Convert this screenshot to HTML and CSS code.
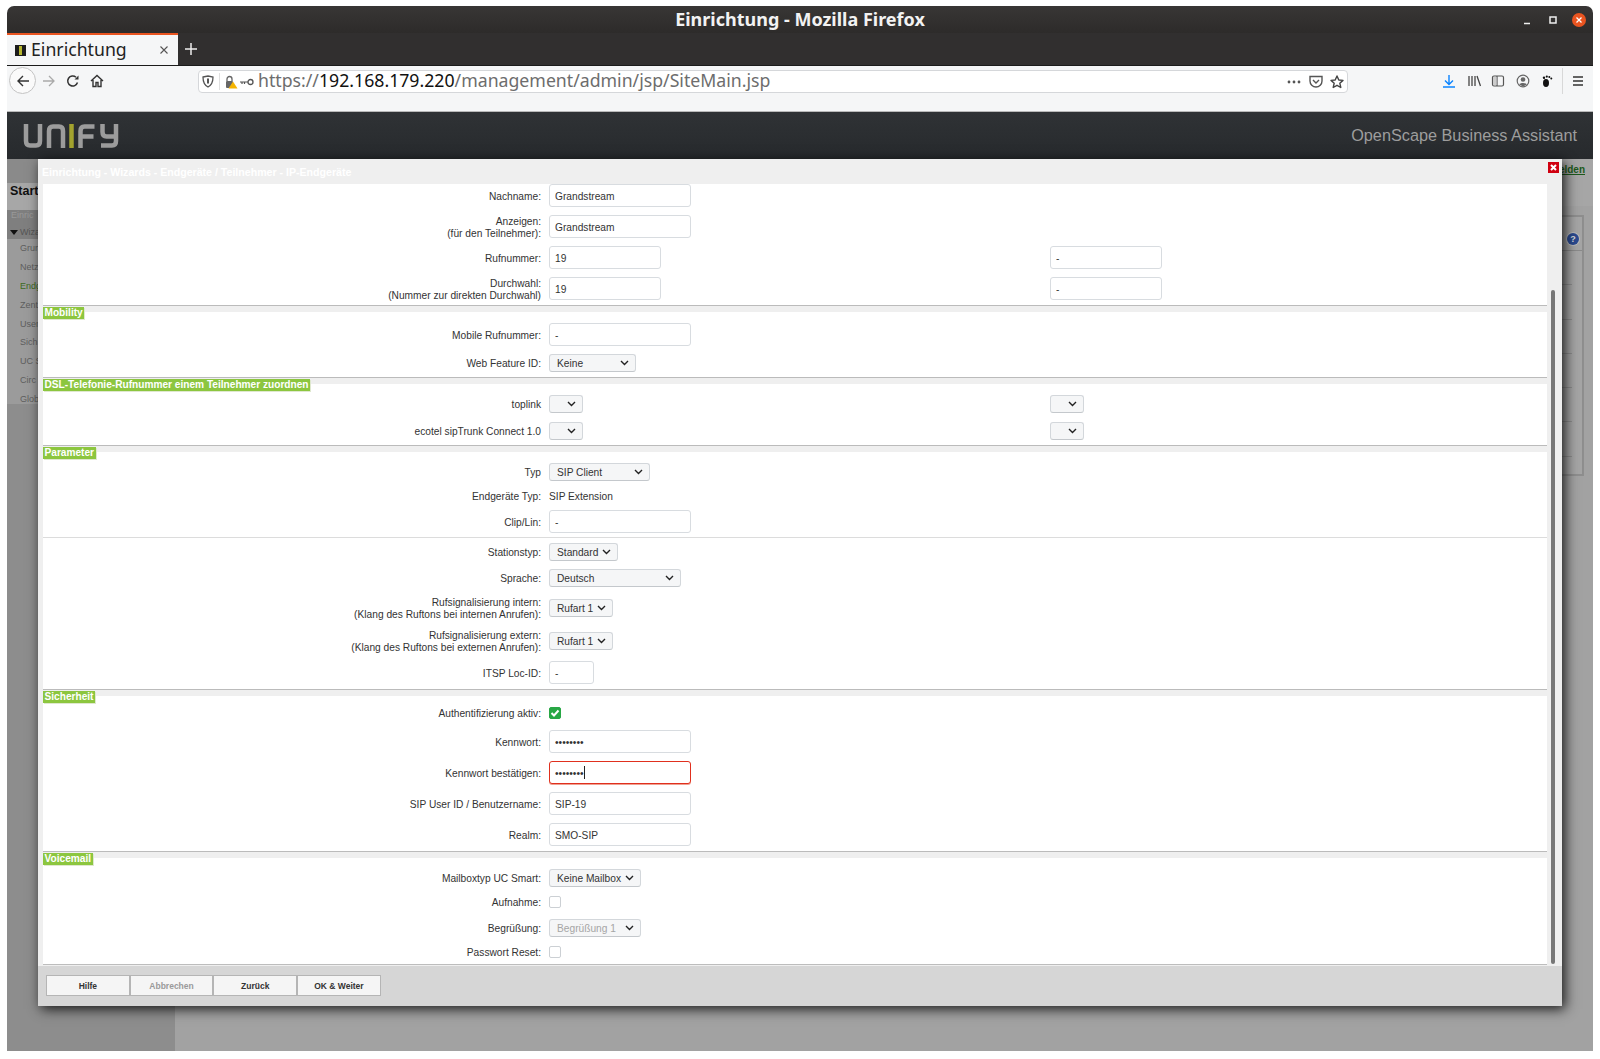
FILE: index.html
```html
<!DOCTYPE html>
<html lang="de">

<head>
    <meta charset="UTF-8">
    <meta name="viewport" content="width=device-width, initial-scale=1.0">
    <title>Einrichtung - Mozilla Firefox</title>
    <link rel="stylesheet" href="styles.css">
</head>

<body>
    <div class="window">
        <div class="titlebar">
            <span></span>
            <div class="title">Einrichtung - Mozilla Firefox</div>
            <div class="win-controls">
                <svg width="14" height="14" viewBox="0 0 14 14"><path d="M4 10.5h6" stroke="#eee" stroke-width="1.4"/></svg>
                <svg width="14" height="14" viewBox="0 0 14 14"><rect x="4" y="4" width="6" height="6" fill="none" stroke="#eee" stroke-width="1.5"/></svg>
                <svg width="14" height="14" viewBox="0 0 14 14"><circle cx="7" cy="7" r="7" fill="#e95420"/><path d="M4.5 4.5l5 5M9.5 4.5l-5 5" stroke="#fff" stroke-width="1.3"/></svg>
            </div>
        </div>

        <div class="tabbar">
            <div class="tab">
                <svg class="favicon" width="11" height="11" viewBox="0 0 11 11"><rect width="11" height="11" fill="#1c1c1c"/><rect x="4" y="1" width="3" height="9" fill="#b5b52e"/></svg>
                <span class="tab-label">Einrichtung</span>
                <svg class="tab-close" width="10" height="10" viewBox="0 0 10 10"><path d="M1.5 1.5l7 7M8.5 1.5l-7 7" stroke="#555" stroke-width="1.1"/></svg>
            </div>
            <svg class="new-tab" width="12" height="12" viewBox="0 0 12 12"><path d="M6 0v12M0 6h12" stroke="#eee" stroke-width="1.5"/></svg>
        </div>

        <div class="navbar">
            <div class="back-btn">
                <svg width="14" height="14" viewBox="0 0 14 14"><path d="M13 7H2M7 2L2 7l5 5" fill="none" stroke="#333" stroke-width="1.4"/></svg>
            </div>
            <svg class="nav-icon forward" width="14" height="14" viewBox="0 0 14 14"><path d="M1 7h11M7 2l5 5-5 5" fill="none" stroke="#aaa" stroke-width="1.3"/></svg>
            <svg class="nav-icon reload" width="14" height="14" viewBox="0 0 14 14"><path d="M11.5 8.5A5 5 0 1 1 10 3.2" fill="none" stroke="#333" stroke-width="1.5"/><path d="M8.5 5.5h4v-4z" fill="#333"/></svg>
            <svg class="nav-icon home" width="14" height="14" viewBox="0 0 14 14"><path d="M1 7l6-5.5L13 7M3 6v6.5h3v-4h2v4h3V6" fill="none" stroke="#333" stroke-width="1.4"/></svg>

            <div class="urlbar">
                <svg class="shield" width="12" height="13" viewBox="0 0 12 13"><path d="M1 2l5-1 5 1c0 5-1 8-5 10C2 10 1 7 1 2z" fill="none" stroke="#555" stroke-width="1.3"/><path d="M6 3.5v5" stroke="#555" stroke-width="2"/></svg>
                <span class="url-sep"></span>
                <svg class="lock" width="14" height="14" viewBox="0 0 14 14"><path d="M3 6V4a2.5 2.5 0 0 1 5 0v2" fill="none" stroke="#666" stroke-width="1.3"/><rect x="2" y="6" width="7" height="7" rx="1" fill="#666"/><path d="M9 6.5l4.5 7h-9z" fill="#f5b400"/></svg>
                <svg class="key" width="14" height="8" viewBox="0 0 14 8"><circle cx="10.5" cy="4" r="2.5" fill="none" stroke="#555" stroke-width="1.3"/><path d="M0 4h8M2 4v2M4.500 4v2" stroke="#555" stroke-width="1.2"/></svg>
                <span class="url"><span class="url-dim">https://</span>192.168.179.220<span class="url-dim">/management/admin/jsp/SiteMain.jsp</span></span>
                <svg class="url-action dots" width="14" height="4" viewBox="0 0 14 4"><circle cx="2" cy="2" r="1.4" fill="#555"/><circle cx="7" cy="2" r="1.4" fill="#555"/><circle cx="12" cy="2" r="1.4" fill="#555"/></svg>
                <svg class="url-action pocket" width="14" height="13" viewBox="0 0 14 13"><path d="M1 1.5h12v4.500a6 6 0 0 1-12 0z" fill="none" stroke="#555" stroke-width="1.4"/><path d="M4 5l3 3 3-3" fill="none" stroke="#555" stroke-width="1.4"/></svg>
                <svg class="url-action star" width="14" height="14" viewBox="0 0 14 14"><path d="M7 1l1.800 4 4.200.4-3.200 2.800 1 4.300L7 10.300 3.200 12.500l1-4.300L1 5.400 5.200 5z" fill="none" stroke="#444" stroke-width="1.4" stroke-linejoin="round"/></svg>
            </div>

            <div class="toolbar">
                <svg width="14" height="14" viewBox="0 0 14 14"><path d="M7 1v9M3 6.500L7 10.500l4-4" fill="none" stroke="#0a84ff" stroke-width="1.4"/><path d="M1 13h12" stroke="#0a84ff" stroke-width="1.6"/></svg>
                <svg width="14" height="14" viewBox="0 0 14 14"><path d="M2 2v10M5 2v10M8 2v10M10 2l3.500 10" fill="none" stroke="#444" stroke-width="1.3"/></svg>
                <svg width="14" height="14" viewBox="0 0 14 14"><rect x="1.500" y="2" width="11" height="10" rx="1.500" fill="none" stroke="#555" stroke-width="1.200"/><path d="M6 2v10" stroke="#555" stroke-width="1.200"/><path d="M2 3h3.500v8H2z" fill="#ccc"/></svg>
                <svg width="14" height="14" viewBox="0 0 14 14"><circle cx="7" cy="7" r="5.800" fill="none" stroke="#666" stroke-width="1.200"/><circle cx="7" cy="5.500" r="2.300" fill="#666"/><path d="M3.200 10.500c1-2 6.600-2 7.600 0L7 12.500z" fill="#666"/></svg>
                <svg width="14" height="14" viewBox="0 0 14 14"><ellipse cx="6" cy="9" rx="3" ry="4" fill="#111"/><circle cx="4" cy="3.800" r="1.200" fill="#111"/><circle cx="6.800" cy="2.600" r="1.100" fill="#111"/><circle cx="9.300" cy="3" r="1" fill="#111"/><circle cx="11.300" cy="4.500" r="1" fill="#111"/></svg>
                <span class="toolbar-sep"></span>
                <svg width="14" height="14" viewBox="0 0 14 14"><path d="M2 3h10M2 7h10M2 11h10" stroke="#333" stroke-width="1.300"/></svg>
            </div>
        </div>

        <div class="appheader">
            <svg class="logo" width="96" height="24" viewBox="0 0 96 24" role="img" aria-label="Unify">
                <g fill="none" stroke="#9c9c9c" stroke-width="4.500">
                    <path d="M3 0v17q0 4.500 4 4.500h6q4 0 4-4.500V0"/>
                    <path d="M26 24V7q0-4.500 4-4.500h6q4 0 4 4.500v17"/>
                    <path d="M57.500 24V7q0-4.500 4-4.500h10M57.500 12.500h13"/>
                    <path d="M79.500 0v8q0 4.500 4 4.500h8M93 0v17q0 4.500-4 4.500H78"/>
                </g>
                <path d="M48.500 24V0" stroke="#a3a32e" stroke-width="4.500"/>
            </svg>
            <div class="app-name">OpenScape Business Assistant</div>
        </div>

        <div class="appbody">
            <div class="sidebar">
                <div class="side-top"></div>
                <div class="side-start">Start</div>
                <div class="side-group">
                    <div class="side-head">Einric</div>
                    <div class="side-head side-open"><i class="tri"></i>Wiza</div>
                </div>
                <div class="side-items">
                    <div>Grun</div>
                    <div>Netz</div>
                    <div class="side-active">Endg</div>
                    <div>Zent</div>
                    <div>User</div>
                    <div>Sich</div>
                    <div>UC S</div>
                    <div>Circ</div>
                    <div>Glob</div>
                </div>
            </div>
            <div class="main">
                <div class="main-top"><a href="#">Abmelden</a></div>
                <div class="main-panel">
                    <div class="panel-head"><i class="help">?</i></div>
                    <div class="panel-row"></div>
                    <div class="panel-row"></div>
                    <div class="panel-row"></div>
                    <div class="panel-row"></div>
                    <div class="panel-row"></div>
                    <div class="panel-row"></div>
                </div>
            </div>
        </div>

        <div class="modal">
            <div class="modal-title">Einrichtung - Wizards - Endgeräte / Teilnehmer - IP-Endgeräte</div>
            <svg class="modal-close" width="11" height="11" viewBox="0 0 11 11"><rect width="11" height="11" fill="#d00010"/><path d="M3 3l5 5M8 3l-5 5" stroke="#fff" stroke-width="2"/></svg>
            <div class="modal-body">
                <form class="form">
                    <div class="section section-first">
                        <div class="row">
                            <label>Nachname:</label>
                            <input type="text" value="Grandstream">
                        </div>
                        <div class="row">
                            <label>Anzeigen:<br>(für den Teilnehmer):</label>
                            <input type="text" value="Grandstream">
                        </div>
                        <div class="row">
                            <label>Rufnummer:</label>
                            <input class="short" type="text" value="19">
                            <input class="short" type="text" value="-">
                        </div>
                        <div class="row">
                            <label>Durchwahl:<br>(Nummer zur direkten Durchwahl)</label>
                            <input class="short" type="text" value="19">
                            <input class="short" type="text" value="-">
                        </div>
                    </div>

                    <div class="divider"><span class="legend">Mobility</span></div>
                    <div class="section">
                        <div class="row">
                            <label>Mobile Rufnummer:</label>
                            <input type="text" value="-">
                        </div>
                        <div class="row row-select">
                            <label>Web Feature ID:</label>
                            <select class="w-87"><option>Keine</option></select>
                        </div>
                    </div>

                    <div class="divider"><span class="legend">DSL-Telefonie-Rufnummer einem Teilnehmer zuordnen</span></div>
                    <div class="section">
                        <div class="row row-select">
                            <label>toplink</label>
                            <select class="w-34"></select>
                            <select class="w-34"></select>
                        </div>
                        <div class="row row-select m9">
                            <label>ecotel sipTrunk Connect 1.0</label>
                            <select class="w-34"></select>
                            <select class="w-34"></select>
                        </div>
                    </div>

                    <div class="divider"><span class="legend">Parameter</span></div>
                    <div class="section">
                        <div class="row row-select">
                            <label>Typ</label>
                            <select class="w-101"><option>SIP Client</option></select>
                        </div>
                        <div class="row row-select m6">
                            <label>Endgeräte Typ:</label>
                            <span class="value">SIP Extension</span>
                        </div>
                        <div class="row m5">
                            <label>Clip/Lin:</label>
                            <input type="text" value="-">
                        </div>
                        <hr class="rule">
                        <div class="row row-select m5">
                            <label>Stationstyp:</label>
                            <select class="w-69"><option>Standard</option></select>
                        </div>
                        <div class="row row-select">
                            <label>Sprache:</label>
                            <select class="w-132"><option>Deutsch</option></select>
                        </div>
                        <div class="row row-select m12">
                            <label>Rufsignalisierung intern:<br>(Klang des Ruftons bei internen Anrufen):</label>
                            <select class="w-64"><option>Rufart 1</option></select>
                        </div>
                        <div class="row row-select m15">
                            <label>Rufsignalisierung extern:<br>(Klang des Ruftons bei externen Anrufen):</label>
                            <select class="w-64"><option>Rufart 1</option></select>
                        </div>
                        <div class="row m11">
                            <label>ITSP Loc-ID:</label>
                            <input class="tiny" type="text" value="-">
                        </div>
                    </div>

                    <div class="divider"><span class="legend">Sicherheit</span></div>
                    <div class="section">
                        <div class="row row-check">
                            <label>Authentifizierung aktiv:</label>
                            <span class="check check-on">
                                <svg width="10" height="10" viewBox="0 0 10 10"><path d="M1.500 5l2.500 2.500L8.500 2.500" fill="none" stroke="#fff" stroke-width="2"/></svg>
                            </span>
                        </div>
                        <div class="row m11">
                            <label>Kennwort:</label>
                            <input class="pass" type="password" value="12345678">
                        </div>
                        <div class="row">
                            <label>Kennwort bestätigen:</label>
                            <div class="caret-wrap">
                                <input class="pass invalid" type="password" value="12345678">
                                <i class="caret"></i>
                            </div>
                        </div>
                        <div class="row">
                            <label>SIP User ID / Benutzername:</label>
                            <input type="text" value="SIP-19">
                        </div>
                        <div class="row">
                            <label>Realm:</label>
                            <input type="text" value="SMO-SIP">
                        </div>
                    </div>

                    <div class="divider"><span class="legend">Voicemail</span></div>
                    <div class="section section-last">
                        <div class="row row-select">
                            <label>Mailboxtyp UC Smart:</label>
                            <select class="w-92"><option>Keine Mailbox</option></select>
                        </div>
                        <div class="row row-check m9">
                            <label>Aufnahme:</label>
                            <span class="check"></span>
                        </div>
                        <div class="row row-select m11">
                            <label>Begrüßung:</label>
                            <select class="w-92" disabled><option>Begrüßung 1</option></select>
                        </div>
                        <div class="row row-check m9">
                            <label>Passwort Reset:</label>
                            <span class="check"></span>
                        </div>
                    </div>
                </form>
                <div class="scrolltrack"><div class="scrollthumb"></div></div>
            </div>
            <div class="modal-footer">
                <button type="button">Hilfe</button>
                <button type="button" disabled>Abbrechen</button>
                <button type="button">Zurück</button>
                <button type="button">OK &amp; Weiter</button>
            </div>
        </div>
    </div>
</body>

</html>
```

FILE: styles.css
```css
* {
    margin: 0;
    padding: 0;
    box-sizing: border-box;
}

html, body {
    height: 100%;
    overflow: hidden;
}

body {
    background: #fff;
    padding: 6px 7px 8px;
    font-family: "Liberation Sans", Arial, sans-serif;
}

.window {
    position: relative;
    height: 1045px;
    display: flex;
    flex-direction: column;
    border-radius: 7px 7px 0 0;
    overflow: hidden;
}

/* browser chrome */
.titlebar {
    height: 27px;
    background: linear-gradient(#383635, #2d2b2a);
    display: grid;
    grid-template-columns: 1fr auto 1fr;
    align-items: center;
}

.title {
    margin-top: -1px;
    color: #f2f2f2;
    font-family: "Noto Sans", sans-serif;
    font-weight: 700;
    font-size: 18px;
}

.win-controls {
    justify-self: end;
    display: flex;
    gap: 12px;
    padding-right: 7px;
}

.tabbar {
    height: 32px;
    background: #312f2f;
    display: flex;
    align-items: center;
}

.tab {
    width: 171px;
    height: 32px;
    background: #f5f6f7;
    border-top: 2px solid #e95420;
    display: flex;
    align-items: center;
    padding-left: 8px;
    color: #222;
}

.tab-label {
    margin: -2px 0 0 5px;
    font-family: "Noto Sans", sans-serif;
    font-size: 17.700px;
    line-height: 26px;
}

.tab-close {
    margin-left: auto;
    margin-right: 9px;
}

.new-tab {
    margin-left: 7px;
}

.navbar {
    height: 47px;
    background: #f5f6f7;
    border-bottom: 1px solid #b9b9b9;
    border-top: 1px solid #1b1b1b;
    display: flex;
    align-items: flex-start;
    padding: 1px 0 0 2px;
}

.back-btn {
    width: 27px;
    height: 27px;
    border: 1px solid #c4c4c4;
    border-radius: 50%;
    background: #fafafa;
    display: flex;
    align-items: center;
    justify-content: center;
}

.nav-icon {
    margin-top: 7px;
}

.forward {
    margin-left: 6px;
}

.reload {
    margin-left: 10px;
}

.home {
    margin-left: 10px;
}

.urlbar {
    width: 1150px;
    height: 23px;
    margin: 3px 0 0 94px;
    background: #fff;
    border: 1px solid #d5d7da;
    border-radius: 4px;
    display: flex;
    align-items: center;
    padding-left: 3px;
}

.url-sep {
    width: 1px;
    height: 17px;
    margin-left: 5px;
    background: #e0e0e0;
}

.lock {
    margin-left: 4px;
}

.key {
    margin-left: 2px;
}

.url {
    margin: -3px 0 0 4px;
    font-family: "Noto Sans", sans-serif;
    font-size: 17.700px;
    color: #111;
    white-space: nowrap;
}

.url-dim {
    color: #6d6d6d;
}

.dots {
    margin-left: auto;
}

.pocket {
    margin-left: 8px;
}

.star {
    margin: 0 3px 0 7px;
}

.toolbar {
    display: flex;
    align-items: center;
    gap: 10.500px;
    margin: 1px 0 0 94px;
}

.toolbar-sep {
    width: 1px;
    height: 26px;
    background: #d8d8d8;
    margin: 0 -2.500px;
}

/* unify header */
.appheader {
    height: 47px;
    background: linear-gradient(#2f3235, #272a2d);
    display: flex;
    align-items: center;
    justify-content: space-between;
    padding: 0 16px;
}

.app-name {
    color: #9d9d9d;
    font-size: 16.250px;
}

/* page behind the dialog */
.appbody {
    flex: 1;
    display: flex;
    background: #a2a2a2;
}

.sidebar {
    width: 168px;
    background: #8d8d8d;
    font-size: 9px;
    color: #555;
}

.side-top {
    height: 24px;
    background: #8a8a8a;
}

.side-start {
    height: 27px;
    line-height: 16px;
    padding-left: 3px;
    background: #a7a7a7;
    color: #111;
    font-size: 12.500px;
    font-weight: 700;
}

.side-group {
    height: 29px;
    background: #7f7f7f;
    color: #999;
}

.side-head {
    height: 14.500px;
    line-height: 10px;
    padding-left: 4px;
}

.side-open {
    line-height: 14px;
    color: #555;
    padding-left: 3px;
}

.tri {
    display: inline-block;
    border: 4px solid transparent;
    border-top: 5px solid #111;
    border-bottom: 0;
    margin-right: 2px;
}

.side-items {
    background: #9b9b9b;
    padding-left: 13px;
    height: 165px;
}

.side-items div {
    height: 18.900px;
    line-height: 19px;
    color: #5e5e5e;
    white-space: nowrap;
}

.side-items .side-active {
    color: #3e6b1e;
}

.main {
    flex: 1;
}

.main-top {
    height: 47px;
    background: #a6a6a6;
    text-align: right;
    padding: 5px 8px 0 0;
    font-size: 10px;
    font-weight: 700;
}

.main-top a {
    color: #1c5a1c;
}

.main-panel {
    margin: 9px 9px 0 20px;
    height: 261px;
    border: 2px solid #8e8e8e;
    background: #a5a5a5;
}

.panel-head {
    height: 34px;
    border-bottom: 1px solid #8a8a8a;
    text-align: right;
    padding: 11px 3px 0 0;
}

.help {
    display: inline-block;
    width: 12px;
    height: 12px;
    border-radius: 50%;
    background: #2b4a90;
    box-shadow: 0 0 0 1px #bbb;
    color: #ddd;
    font: 700 9px/12px "Liberation Sans", sans-serif;
    text-align: center;
}

.panel-row {
    height: 34.300px;
    border-bottom: 1px solid #8e8e8e;
    margin-right: 10px;
}

.panel-row:first-of-type {
    height: 44px;
}

/* dialog */
.modal {
    position: absolute;
    left: 31px;
    top: 153px;
    width: 1524px;
    height: 847px;
    background: #efefef;
    box-shadow: 3px 3px 12px rgba(0, 0, 0, 0.85);
    display: flex;
    flex-direction: column;
}

.modal-title {
    height: 25px;
    line-height: 26px;
    padding-left: 4px;
    color: #fff;
    font-size: 10.600px;
    font-weight: 700;
}

.modal-close {
    position: absolute;
    top: 3px;
    right: 3px;
}

.modal-body {
    height: 781px;
    display: flex;
    padding-left: 5px;
}

.form {
    width: 1504px;
    background: #fff;
    border-bottom: 1px solid #bdbdbd;
}

.scrolltrack {
    width: 15px;
    padding: 106px 0 0 4px;
}

.scrollthumb {
    width: 4px;
    height: 674px;
    background: #777;
    border-radius: 2px;
}

.modal-footer {
    margin-top: 1px;
    height: 40px;
    background: #d6d6d6;
    display: flex;
    padding: 9px 0 0 8px;
}

.modal-footer button {
    width: 83.700px;
    height: 21px;
    border: 1px solid #b5b5b5;
    background: #f5f5f5;
    color: #333;
    font-family: "Liberation Sans", sans-serif;
    font-size: 8.500px;
    font-weight: 700;
}

.modal-footer button:disabled {
    color: #9a9a9a;
}

/* form rows */
.section {
    padding: 11px 0 5px;
}

.section-first {
    padding-top: 0;
}

.section-last {
    padding-bottom: 6px;
}

.divider {
    position: relative;
    height: 7px;
    background: #efefef;
    border-top: 1px solid #bbb;
}

.legend {
    position: absolute;
    left: 0;
    top: 1px;
    height: 12px;
    line-height: 12px;
    padding: 0 1.500px;
    background: #8cc63f;
    color: #fff;
    font-size: 10.150px;
    font-weight: 700;
    white-space: nowrap;
    box-shadow: 1px 1px 0 #dfe8cf;
}

.row {
    display: grid;
    grid-template-columns: 498px 493px 1fr;
    grid-template-rows: 100%;
    column-gap: 8px;
    align-items: center;
    height: 23px;
    margin-top: 8px;
}

.section > .row:first-child {
    margin-top: 0;
}

.row-select {
    height: 18px;
}

.row-check {
    height: 12px;
}

.m5 { margin-top: 5px; }
.m6 { margin-top: 6px; }
.m9 { margin-top: 9px; }
.m11 { margin-top: 11px; }
.m12 { margin-top: 12px; }
.m15 { margin-top: 15px; }

label {
    padding-top: 2px;
    text-align: right;
    font-size: 10.200px;
    line-height: 12px;
    color: #333;
    white-space: nowrap;
}

.value {
    font-size: 10.200px;
    color: #333;
}

input {
    display: block;
    width: 142px;
    height: 23px;
    padding: 1px 0 0 5px;
    border: 1px solid #d8dce0;
    border-radius: 3px;
    background: #fff;
    color: #333;
    font-family: "Liberation Sans", sans-serif;
    font-size: 10.200px;
    outline: none;
}

input.short {
    width: 112px;
}

input.tiny {
    width: 45px;
}

input.invalid {
    border-color: #e0301e;
    box-shadow: 0 1px 0 #f0a090;
}

.caret-wrap {
    position: relative;
    width: 142px;
}

.caret {
    position: absolute;
    left: 35px;
    top: 5px;
    width: 1px;
    height: 13px;
    background: #222;
}

select {
    display: block;
    height: 18px;
    padding-left: 7px;
    border: 1px solid #d3d7db;
    border-bottom-color: #c4c8cc;
    border-radius: 3px;
    background: #f5f6f7 url("data:image/svg+xml,%3Csvg xmlns='http://www.w3.org/2000/svg' width='9' height='6'%3E%3Cpath d='M1 1l3.500 3.500L8 1' fill='none' stroke='%23222' stroke-width='1.400'/%3E%3C/svg%3E") no-repeat right 6px center;
    appearance: none;
    -webkit-appearance: none;
    color: #333;
    font-family: "Liberation Sans", sans-serif;
    font-size: 10.200px;
    opacity: 1;
}

select:disabled {
    color: #a5a5a5;
}

.w-34 { width: 34px; }
.w-64 { width: 64px; }
.w-69 { width: 69px; }
.w-87 { width: 87px; }
.w-92 { width: 92px; }
.w-101 { width: 101px; }
.w-132 { width: 132px; }

.rule {
    border: 0;
    border-top: 1px solid #dcdcdc;
    margin-top: 4px;
}

.check {
    display: flex;
    align-items: center;
    justify-content: center;
    width: 12px;
    height: 12px;
    border: 1px solid #ccd0d4;
    border-radius: 2px;
    background: #fff;
}

.check-on {
    background: #28a745;
    border-color: #28a745;
}
```
